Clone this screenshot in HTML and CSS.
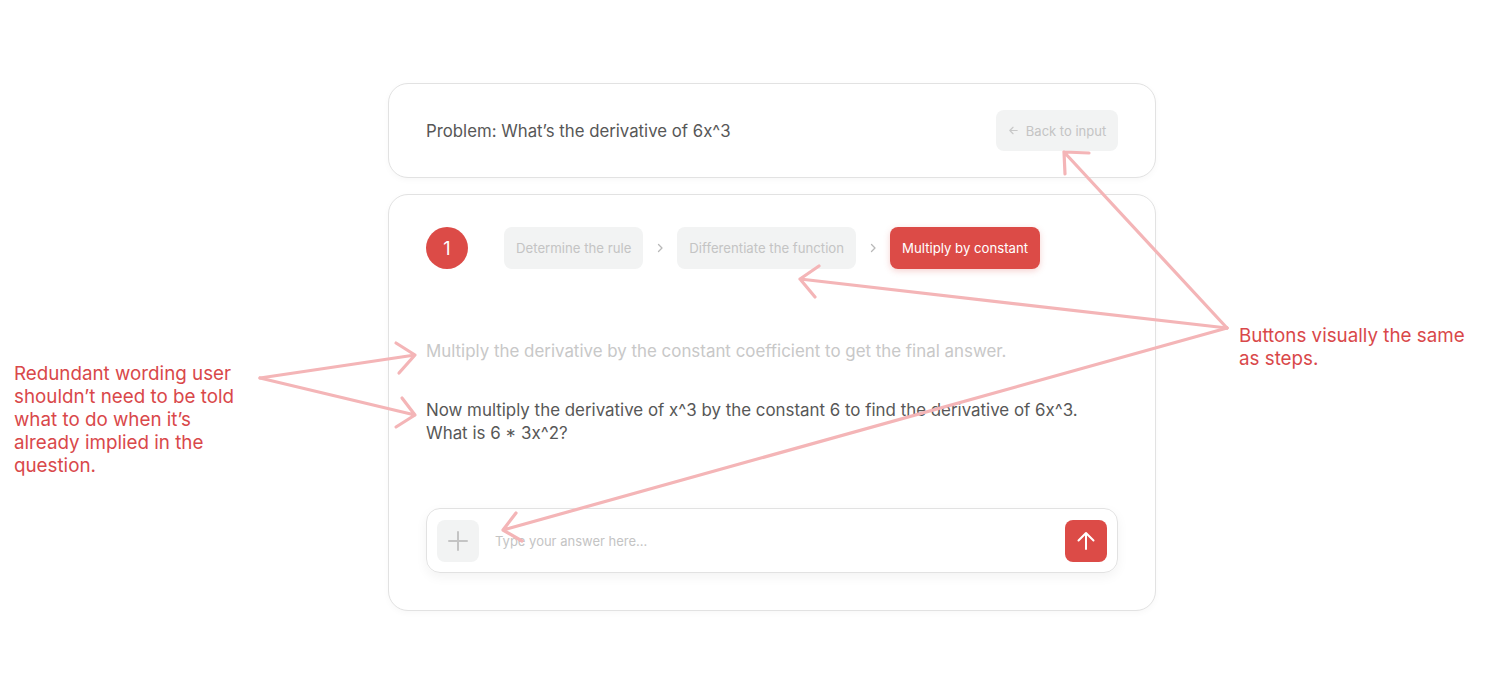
FILE: index.html
```html
<!DOCTYPE html>
<html lang="en">
<head>
<meta charset="utf-8">
<title>Derivative steps</title>
<link rel="stylesheet" href="styles.css">
</head>
<body>
<div class="page">
  <main class="column">
    <section class="card problem-card">
      <div class="problem">Problem: What’s the derivative of 6x^3</div>
      <button class="back-btn">
        <svg width="11" height="11" viewBox="0 0 12 12" fill="none" stroke="#c8c8c8" stroke-width="1.3" stroke-linecap="round" stroke-linejoin="round"><path d="M10 6H2M5.5 2.5L2 6l3.5 3.5"/></svg>
        <span>Back to input</span>
      </button>
    </section>

    <section class="card step-card">
      <div class="steps">
        <div class="step-num">1</div>
        <div class="pills">
          <div class="pill">Determine the rule</div>
          <span class="chev"><svg width="8" height="10" viewBox="0 0 8 10" fill="none" stroke="#b8b8b8" stroke-width="1.3" stroke-linecap="round" stroke-linejoin="round"><path d="M2.5 1.5L6 5l-3.5 3.5"/></svg></span>
          <div class="pill">Differentiate the function</div>
          <span class="chev"><svg width="8" height="10" viewBox="0 0 8 10" fill="none" stroke="#b8b8b8" stroke-width="1.3" stroke-linecap="round" stroke-linejoin="round"><path d="M2.5 1.5L6 5l-3.5 3.5"/></svg></span>
          <div class="pill active">Multiply by constant</div>
        </div>
      </div>
      <p class="hint">Multiply the derivative by the constant coefficient to get the final answer.</p>
      <p class="question">Now multiply the derivative of x^3 by the constant 6 to find the derivative of 6x^3.<br>What is 6 * 3x^2?</p>
      <div class="composer">
        <button class="plus-btn">
          <svg width="22" height="22" viewBox="0 0 22 22" fill="none" stroke="#c4c4c4" stroke-width="2" stroke-linecap="round"><path d="M11 2v18M2 11h18"/></svg>
        </button>
        <div class="placeholder">Type your answer here...</div>
        <button class="send-btn">
          <svg width="22" height="22" viewBox="0 0 22 22" fill="none" stroke="#ffffff" stroke-width="2" stroke-linecap="round" stroke-linejoin="round"><path d="M11 19V3M3.5 10.5L11 3l7.5 7.5"/></svg>
        </button>
      </div>
    </section>
  </main>

  <div class="note note-left">Redundant wording user shouldn’t need to be told what to do when it’s already implied in the question.</div>
  <div class="note note-right">Buttons visually the same as steps.</div>

  <svg class="arrows" width="1494" height="682" viewBox="0 0 1494 682" fill="none" stroke="#f4b5b7" stroke-width="3.2" stroke-linecap="round" stroke-linejoin="round">
    <path d="M260 378L415 355M396 343L415 355L399 373"/>
    <path d="M260 378L415 415M402 398L415 415L396 427"/>
    <path d="M1227 328L1064 152M1089 153L1064 152L1065 174"/>
    <path d="M1227 328L800 279M819 266L800 279L815 297"/>
    <path d="M1227 328L503 530M516 513L503 530L522 541"/>
  </svg>
</div>
</body>
</html>
```

FILE: styles.css
```css
* { box-sizing: border-box; }
html, body { margin: 0; padding: 0; background: #ffffff; }
body {
  font-family: Inter, "Noto Sans", "Liberation Sans", sans-serif;
  width: 1494px;
  height: 682px;
  overflow: hidden;
}
.page {
  position: relative;
  width: 1494px;
  height: 682px;
}
.column {
  padding: 83px 0 0 388px;
  display: flex;
  flex-direction: column;
  gap: 16px;
  width: 1156px;
}
.card {
  width: 768px;
  background: #fff;
  border: 1px solid #e2e2e2;
  border-radius: 20px;
  box-shadow: 0 2px 6px rgba(0,0,0,0.03);
}
.problem-card {
  height: 95px;
  padding: 0 37px;
  display: flex;
  align-items: center;
  justify-content: space-between;
}
.problem {
  font-size: 16.8px;
  color: #575757;
}
.back-btn {
  height: 41px;
  width: 122px;
  border: none;
  border-radius: 8px;
  background: #f2f3f3;
  display: flex;
  align-items: center;
  justify-content: center;
  gap: 7px;
  font-family: inherit;
  font-size: 13px;
  color: #c4c4c4;
  padding: 0;
}
.step-card {
  height: 417px;
  padding: 32px 37px 0;
  display: flex;
  flex-direction: column;
}
.steps {
  display: flex;
  align-items: center;
  gap: 36px;
}
.step-num {
  width: 42px;
  height: 42px;
  border-radius: 50%;
  background: #dc4b47;
  color: #fff;
  font-size: 18px;
  display: flex;
  align-items: center;
  justify-content: center;
}
.pills {
  display: flex;
  align-items: center;
  gap: 13px;
}
.pill {
  height: 42px;
  padding: 0 12px;
  border-radius: 8px;
  background: #f2f3f3;
  color: #c4c4c4;
  font-size: 13.2px;
  display: flex;
  align-items: center;
}
.pill.active {
  background: #dc4b47;
  color: #fff;
  box-shadow: 0 2px 6px rgba(220,75,71,0.25);
}
.chev { display: flex; width: 8px; }
.hint {
  margin: 71px 0 0;
  font-size: 16.9px;
  line-height: 23px;
  color: #c8c8c8;
}
.question {
  margin: 36px 0 0;
  font-size: 16.9px;
  line-height: 23px;
  color: #575757;
}
.composer {
  margin-top: 63px;
  width: 692px;
  height: 65px;
  border: 1px solid #e2e2e2;
  border-radius: 14px;
  box-shadow: 0 4px 12px rgba(0,0,0,0.05);
  display: flex;
  align-items: center;
  padding: 0 10px;
}
.plus-btn, .send-btn {
  width: 42px;
  height: 42px;
  border: none;
  border-radius: 8px;
  display: flex;
  align-items: center;
  justify-content: center;
  padding: 0;
}
.plus-btn { background: #f2f3f3; }
.send-btn { background: #dc4b47; }
.placeholder {
  flex: 1;
  margin-left: 16px;
  font-size: 13px;
  color: #c4c4c4;
}
.note {
  position: absolute;
  font-size: 18.8px;
  line-height: 23px;
  color: #d9484a;
}
.note-left { left: 14px; top: 362px; width: 236px; }
.note-right { left: 1239px; top: 324px; width: 250px; }
.arrows {
  position: absolute;
  left: 0;
  top: 0;
  pointer-events: none;
}
```
